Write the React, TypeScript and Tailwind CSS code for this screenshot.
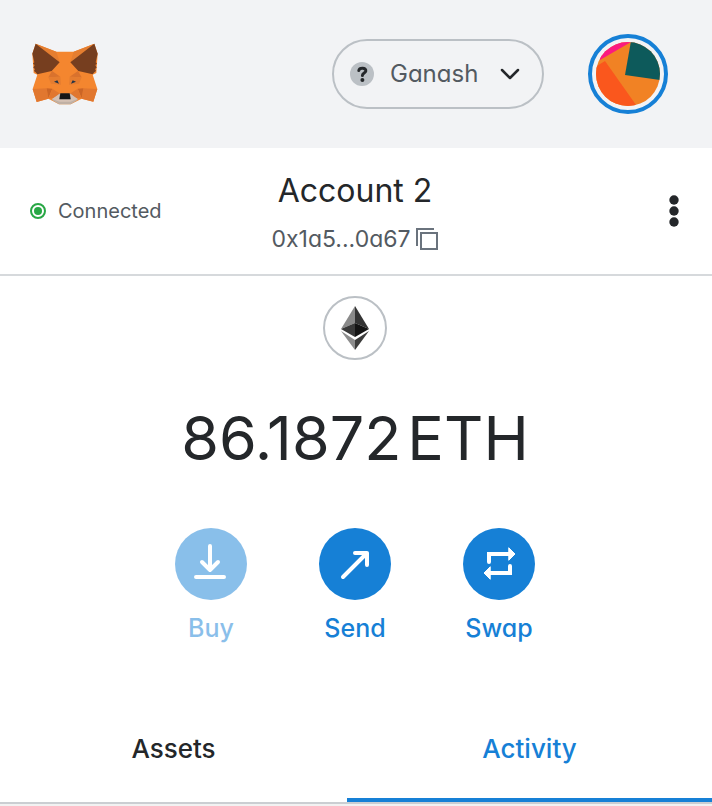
import { ReactNode } from 'react';

function Fox() {
  return (
    <svg viewBox="36 38 196 186" className="h-[62px] w-[66px]" aria-hidden="true">
      <path d="M46 40 108 64H160L222 40 232 70 228 128 217 133 231 176 219 214 184 205 151 222H116L84 205 49 215 37 176 51 133 40 128 36 70Z" fill="#f4862f" />
      <path d="M46 40 118 96 108 64ZM222 40 150 96 160 64Z" fill="#e57e30" />
      <path d="M46 40 118 96 94 122 51 132 46 126 41 122 44 116 39 112 43 104 38 100 42 96 36 70ZM222 40 150 96 174 122 217 132 222 126 227 122 224 116 229 112 225 104 230 100 226 96 232 70Z" fill="#763e1f" />
      <path d="M37 176 79 174 84 205 49 215ZM231 176 189 174 184 205 219 214Z" fill="#e1772f" />
      <path d="M79 174 96 175 84 204ZM189 174 172 175 184 204Z" fill="#cb6526" />
      <path d="M96 175 122 192 116 200 84 205ZM172 175 146 192 152 200 184 205Z" fill="#e1772f" />
      <path d="M95 122 120 139 84 141ZM173 122 148 139 184 141Z" fill="#d9722d" />
      <path d="M84 141 120 139 122 163 92 160ZM184 141 148 139 146 163 176 160Z" fill="#e57d30" />
      <path d="M94 208 117 190H151L173 208 151 222H116Z" fill="#c0b0a4" />
      <path d="M95 206 117 192V207H151V192L172 206 150 214H118Z" fill="#d5c1b4" />
      <path d="M101 154 111 150 116 160ZM167 154 157 150 152 160Z" fill="#233447" />
      <path d="M120 189H148L151 207H117Z" fill="#161616" />
    </svg>
  );
}

function Avatar() {
  return (
    <svg viewBox="0 0 64 64" className="size-16 rounded-full" aria-hidden="true">
      <path d="M0 0H64V64H0Z" fill="#f18224" />
      <path d="M0 0H38L35 0 4 18Z" fill="#fb1a80" />
      <path d="M35 -1 29 33 70 39V-1Z" fill="#0d5a5b" />
      <path d="M-4 27 9 19 45 70H-4Z" fill="#fa571d" />
    </svg>
  );
}

function Action({ label, disabled, children }: { label: string; disabled?: boolean; children: ReactNode }) {
  return (
    <button type="button" disabled={disabled} className="flex w-[72px] flex-col items-center gap-2 text-[25px] leading-10 font-medium text-[#1680d6] disabled:opacity-50">
      <span className="flex size-[72px] items-center justify-center rounded-full bg-[#1680d6]">
        <svg viewBox="0 0 36 36" className="size-9 overflow-visible" fill="none" stroke="white" strokeWidth="4" strokeLinecap="round" strokeLinejoin="round" aria-hidden="true">{children}</svg>
      </span>
      {label}
    </button>
  );
}

export default function App() {
  return (
    <div className="bg-white font-['Inter','Liberation_Sans',sans-serif] text-[#24272a] [font-feature-settings:'cv11']">
      <header className="flex h-[148px] items-center bg-[#f2f3f5] pr-11 pl-8">
        <Fox />
        <button type="button" className="mr-11 ml-auto flex h-[70px] w-[212px] items-center rounded-full border-2 border-[#bbc0c5] px-4 text-2xl text-[#535a61]">
          <svg viewBox="0 0 24 24" className="mr-4 size-6" aria-hidden="true">
            <circle cx="12" cy="12" r="12" fill="#bbc0c5" />
            <path d="M8.800 8.500C9.500 5.300 16.300 5.500 15.800 9C15.500 11.200 12.400 11 12.400 13.500" fill="none" stroke="#24272a" strokeWidth="3" strokeLinecap="round" />
            <circle cx="12.400" cy="18" r="2" fill="#24272a" />
          </svg>
          Ganash
          <svg viewBox="0 0 20 12" className="mr-1.5 ml-auto h-3 w-5" fill="none" stroke="#24272a" strokeWidth="2.500" strokeLinecap="round" strokeLinejoin="round" aria-hidden="true">
            <path d="M2 2 10 10 18 2" />
          </svg>
        </button>
        <button type="button" aria-label="Account menu" className="flex size-20 items-center justify-center rounded-full border-4 border-[#1680d6]">
          <Avatar />
        </button>
      </header>

      <section className="grid h-32 grid-cols-[1fr_auto_1fr] items-center border-b-2 border-[#d6d9dc] pr-8 pl-[30px]">
        <div className="flex items-center gap-3 text-xl text-[#535a61]">
          <span className="flex size-4 items-center justify-center rounded-full border-2 border-[#28a745]">
            <span className="size-2 rounded-full bg-[#28a745]" />
          </span>
          Connected
        </div>
        <div className="flex flex-col items-center gap-3 pt-1">
          <h1 className="text-[32px] leading-10">Account 2</h1>
          <button type="button" className="flex items-center gap-1 text-[23px] leading-8 text-[#535a61]">
            0x1a5...0a67
            <svg viewBox="0 0 24 24" className="size-6" fill="none" stroke="#6a737d" strokeWidth="2" aria-hidden="true">
              <path d="M2 19V2H19M6 6H22V22H6Z" />
            </svg>
          </button>
        </div>
        <button type="button" aria-label="Account options" className="justify-self-end">
          <svg viewBox="0 0 12 34" className="h-[34px] w-3" fill="#24272a" aria-hidden="true">
            <circle cx="6" cy="6" r="4.700" />
            <circle cx="6" cy="17" r="4.700" />
            <circle cx="6" cy="28" r="4.700" />
          </svg>
        </button>
      </section>

      <main className="flex flex-col items-center pt-5 pr-0.5">
        <div className="flex size-16 items-center justify-center rounded-full border-2 border-[#bbc0c5]">
          <svg viewBox="0 0 28 44" className="h-11 w-7" aria-hidden="true">
            <path d="M14 0 0 23 14 17Z" fill="#8a8a8a" />
            <path d="M14 0 28 23 14 17Z" fill="#343434" />
            <path d="M0 23 14 17V31Z" fill="#393939" />
            <path d="M28 23 14 17V31Z" fill="#141414" />
            <path d="M0 25 14 34V44Z" fill="#8c8c8c" />
            <path d="M28 25 14 34V44Z" fill="#3c3c3b" />
          </svg>
        </div>
        <p className="mt-9 flex gap-1.5 text-[61px] leading-[84px]">
          <span>86.1872</span>
          <span>ETH</span>
        </p>
        <div className="mt-12 flex gap-[72px]">
          <Action label="Buy" disabled>
            <path d="M17 0V24M9 16 17 24 25 16M3 31H31" />
          </Action>
          <Action label="Send">
            <path d="M6 31 30 7M18 7H30V19" />
          </Action>
          <Action label="Swap">
            <path d="M8 16V8H28M29 20V27H8" strokeLinejoin="miter" />
            <path d="M28 2 34 8 28 14ZM9 21 3 27 9 33Z" fill="white" strokeWidth="1" />
          </Action>
        </div>
      </main>

      <div role="tablist" className="mt-11 grid grid-cols-[347fr_365fr] border-b-2 border-[#cbced2] text-[26px] leading-10 font-medium">
        <button type="button" role="tab" aria-selected="false" className="h-[110px] border-b-4 border-transparent pt-2">Assets</button>
        <button type="button" role="tab" aria-selected="true" className="h-[110px] border-b-4 border-[#1680d6] pt-2 text-[#1680d6]">Activity</button>
      </div>
      <div className="h-0.5 bg-[#f2f2f2]" />
    </div>
  );
}
